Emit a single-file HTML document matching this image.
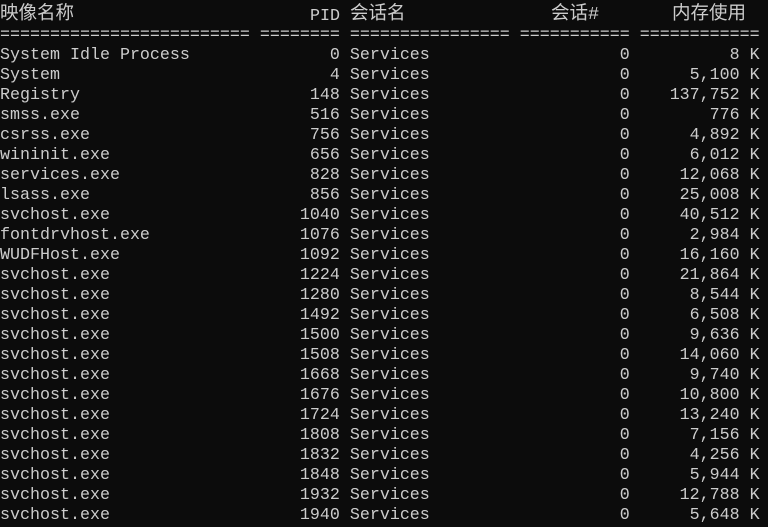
<!DOCTYPE html>
<html><head><meta charset="utf-8"><style>
html,body{margin:0;padding:0;background:#0c0c0c;width:768px;height:527px;overflow:hidden}
body{position:relative;color:#cccccc;font-family:"Liberation Mono","Noto Sans CJK SC",monospace;font-size:16.67px}
pre{position:absolute;left:0;top:26px;margin:0;font:inherit;line-height:20px;white-space:pre}
.h{position:absolute;top:4px;line-height:22px;font-family:"Liberation Mono","Noto Sans CJK SC",monospace;font-size:18.5px;white-space:pre}
</style></head><body>
<span class="h" style="left:0">映像名称</span>
<span class="h" style="left:310px;font-size:16.67px;top:6px">PID</span>
<span class="h" style="left:350px">会话名</span>
<span class="h" style="left:551px">会话#</span>
<span class="h" style="left:672px">内存使用</span>
<pre>========================= ======== ================ =========== ============
System Idle Process              0 Services                   0          8 K
System                           4 Services                   0      5,100 K
Registry                       148 Services                   0    137,752 K
smss.exe                       516 Services                   0        776 K
csrss.exe                      756 Services                   0      4,892 K
wininit.exe                    656 Services                   0      6,012 K
services.exe                   828 Services                   0     12,068 K
lsass.exe                      856 Services                   0     25,008 K
svchost.exe                   1040 Services                   0     40,512 K
fontdrvhost.exe               1076 Services                   0      2,984 K
WUDFHost.exe                  1092 Services                   0     16,160 K
svchost.exe                   1224 Services                   0     21,864 K
svchost.exe                   1280 Services                   0      8,544 K
svchost.exe                   1492 Services                   0      6,508 K
svchost.exe                   1500 Services                   0      9,636 K
svchost.exe                   1508 Services                   0     14,060 K
svchost.exe                   1668 Services                   0      9,740 K
svchost.exe                   1676 Services                   0     10,800 K
svchost.exe                   1724 Services                   0     13,240 K
svchost.exe                   1808 Services                   0      7,156 K
svchost.exe                   1832 Services                   0      4,256 K
svchost.exe                   1848 Services                   0      5,944 K
svchost.exe                   1932 Services                   0     12,788 K
svchost.exe                   1940 Services                   0      5,648 K
svchost.exe                   1952 Services                   0     21,236 K</pre>
</body></html>
